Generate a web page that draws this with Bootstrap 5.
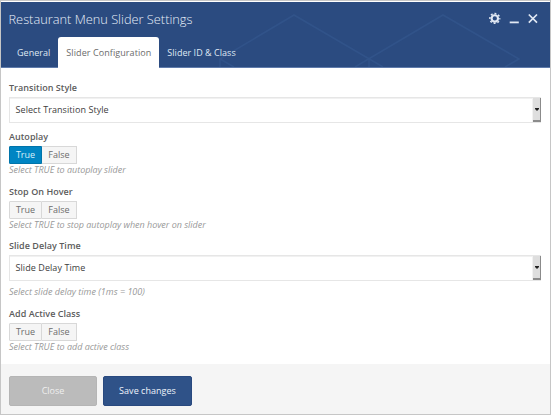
<!DOCTYPE html>
<html lang="en">
<head>
<meta charset="utf-8">
<title>Restaurant Menu Slider Settings</title>
<link href="https://cdn.jsdelivr.net/npm/bootstrap@5.3.0/dist/css/bootstrap.min.css" rel="stylesheet">
<style>
html, body { height: 100%; }
body { font: 9px/12px "Open Sans", "Noto Sans", sans-serif; color: #5a5a5a; overflow: hidden; background: #fff; }
.panel { height: 415px; border: 1px solid #c6c6c6; padding-top: 1px; }
.panel-head { height: 66px; background: #2b4b80; border-bottom: 1px solid #5f7bab; }
.lines { left: 0; top: 0; width: 549px; height: 65px; }
.panel-title { font-size: 12.8px; line-height: 18px; font-weight: 300; color: #e6edf8; margin: 0; padding: 8px 0 0 7.5px; width: 300px; }
.tools { padding: 10px 12px 0 0; }
.panel-head .nav-tabs { border: 0; padding-left: 8px; margin-top: 9px; --bs-nav-tabs-border-width: 0; }
.panel-head .nav-link { height: 31px; padding: 0 8px; line-height: 31px; color: #dfe7f3; font-size: 9px; letter-spacing: .03px; border: 0; margin: 0; border-radius: 3px 3px 0 0; }
.panel-head .nav-link.active { color: #6b6b6b; background: #fff; width: 101px; letter-spacing: .08px; }
.panel-form { height: 296px; padding: 14px 9px 0 8px; }
.form-label { display: block; font-weight: 600; font-size: 9px; line-height: 12px; height: 12px; margin: 0; color: #5c5c5c; letter-spacing: .04px; }
.picker { height: 26px; border: 1px solid #e6e6e6; box-shadow: inset 0 1px 0 #f1f1f1; margin-top: 3px; color: #404040; padding-left: 5.5px; line-height: 24px; letter-spacing: .07px; }
.picker-arrow { width: 8px; height: 24px; margin-right: -1px; background: #dedede; border: solid #8b8b8b; border-width: 0 1px 2px 0; box-shadow: -1px 0 #f2f2f2; }
.toggle { margin-top: 3px; height: 18px; display: flex; width: 68px; }
.toggle .btn { font-size: 9px; line-height: 16px; padding: 0; border: 1px solid #d8d8d8; border-radius: 0; background: #f5f5f5; color: #6c6c6c; }
.toggle .btn:first-child { flex: 0 0 33px; border-radius: 1px 0 0 1px; }
.toggle .btn + .btn { flex: 0 0 35px; border-left-width: 0; }
.toggle .btn.active { background: #0085c3; border-color: #0074aa; color: #d9f0fa; }
.hint { font-style: italic; color: #999; line-height: 12px; height: 12px; font-size: 9px; letter-spacing: -.02px; }
.hint.spaced { margin-top: 5px; letter-spacing: .01px; }
.panel-foot { height: 50px; background: #f5f5f5; padding: 12px 8px; gap: 6px; }
.panel-foot .btn { height: 30px; width: 88px; padding: 0; font-size: 9px; line-height: 28px; border-radius: 2px; border: 1px solid #b5b5b5; background: #bbb; color: #efefef; }
.panel-foot .btn.save { width: 89px; border-color: #29497f; background: #2f5288; color: #eef3fb; letter-spacing: .03px; }
</style>
</head>
<body>
<div class="panel d-flex flex-column">
  <header class="panel-head position-relative flex-shrink-0">
    <svg class="lines position-absolute" viewBox="1 2 549 65" fill="none" stroke="#315389" stroke-width="1.6"><path d="M234 67L220 59L294 15L383 67M355 67L443 15L519 59L505 67M220 59V67M369 59V67"/></svg>
    <div class="d-flex justify-content-between position-relative">
      <h1 class="panel-title text-nowrap">Restaurant Menu Slider Settings</h1>
      <div class="tools">
        <svg width="50" height="13" viewBox="488 12 50 13" class="d-block" fill="none" stroke="#e1e8f3">
          <circle cx="494.8" cy="18.4" r="3.2" stroke-width="2.1"/>
          <circle cx="494.8" cy="18.4" r="4.9" stroke-width="1.6" stroke-dasharray="1.9 1.95" stroke-dashoffset=".95"/>
          <path d="M509.7 22.4H518.8" stroke-width="1.8"/>
          <path d="M528.8 14.5L537 22.7M537 14.5L528.8 22.7" stroke-width="1.7"/>
        </svg>
      </div>
    </div>
    <nav class="nav nav-tabs position-relative">
      <a class="nav-link">General</a>
      <a class="nav-link active text-nowrap">Slider Configuration</a>
      <a class="nav-link">Slider ID &amp; Class</a>
    </nav>
  </header>
  <main class="panel-form">
    <section style="height:49px">
      <label class="form-label">Transition Style</label>
      <div class="picker d-flex justify-content-between"><span>Select Transition Style</span>
        <span class="picker-arrow d-flex align-items-center justify-content-center"><svg width="4" height="3" viewBox="0 0 4 3"><path d="M0 0H4V1L2 3L0 1Z" fill="#222"/></svg></span></div>
    </section>
    <section style="height:55px">
      <label class="form-label">Autoplay</label>
      <div class="toggle"><button class="btn active">True</button><button class="btn">False</button></div>
      <div class="hint">Select TRUE to autoplay slider</div>
    </section>
    <section style="height:54px">
      <label class="form-label">Stop On Hover</label>
      <div class="toggle"><button class="btn">True</button><button class="btn">False</button></div>
      <div class="hint">Select TRUE to stop autoplay when hover on slider</div>
    </section>
    <section style="height:68px">
      <label class="form-label">Slide Delay Time</label>
      <div class="picker d-flex justify-content-between"><span>Slide Delay Time</span>
        <span class="picker-arrow d-flex align-items-center justify-content-center"><svg width="4" height="3" viewBox="0 0 4 3"><path d="M0 0H4V1L2 3L0 1Z" fill="#222"/></svg></span></div>
      <div class="hint spaced">Select slide delay time (1ms = 100)</div>
    </section>
    <section>
      <label class="form-label">Add Active Class</label>
      <div class="toggle"><button class="btn">True</button><button class="btn">False</button></div>
      <div class="hint">Select TRUE to add active class</div>
    </section>
  </main>
  <footer class="panel-foot d-flex flex-shrink-0">
    <button class="btn">Close</button>
    <button class="btn save">Save changes</button>
  </footer>
</div>
<script src="https://cdn.jsdelivr.net/npm/bootstrap@5.3.0/dist/js/bootstrap.bundle.min.js"></script>
</body>
</html>
